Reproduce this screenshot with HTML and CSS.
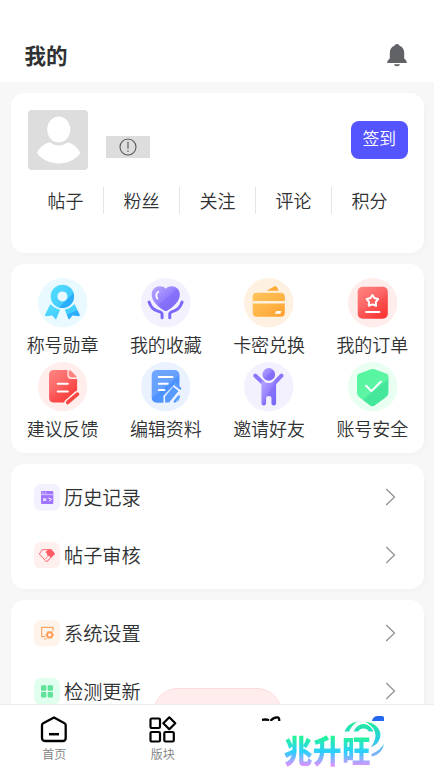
FILE: index.html
```html
<!DOCTYPE html>
<html lang="zh-CN">
<head>
<meta charset="utf-8">
<title>我的</title>
<link rel="stylesheet" href="styles.css">
</head>
<body>
<svg class="defs" width="0" height="0">
  <defs>
    <linearGradient id="cyan" x1="0" y1="0" x2="1" y2="1"><stop offset=".2" stop-color="#50d9ff"/><stop offset=".65" stop-color="#43ccff"/><stop offset=".68" stop-color="#2caefc"/></linearGradient>
    <linearGradient id="violet" x1="0" y1="0" x2="1" y2="1"><stop offset=".1" stop-color="#b3a0ff"/><stop offset=".48" stop-color="#9580fd"/><stop offset=".52" stop-color="#8772fa"/><stop offset="1" stop-color="#7768f8"/></linearGradient>
    <linearGradient id="orange" x1="0" y1="0" x2="1" y2="1"><stop offset="0" stop-color="#ffc45e"/><stop offset=".5" stop-color="#ffb547"/><stop offset="1" stop-color="#ff9f30"/></linearGradient>
    <linearGradient id="red" x1="0" y1="0" x2=".7" y2="1"><stop offset="0" stop-color="#ff8583"/><stop offset=".5" stop-color="#fb6665"/><stop offset=".65" stop-color="#fa5352"/><stop offset="1" stop-color="#fa3938"/></linearGradient>
    <linearGradient id="blue" x1="0" y1="0" x2=".7" y2="1"><stop offset="0" stop-color="#70a7ff"/><stop offset=".55" stop-color="#659fff"/><stop offset=".6" stop-color="#4b91ff"/><stop offset="1" stop-color="#5599ff"/></linearGradient>
    <linearGradient id="green" x1="0" y1="0" x2=".7" y2="1"><stop offset="0" stop-color="#52f69d"/><stop offset=".62" stop-color="#5df5a5"/><stop offset=".67" stop-color="#45e69c"/><stop offset="1" stop-color="#45e99a"/></linearGradient>
    <linearGradient id="arc" gradientUnits="userSpaceOnUse" x1="0" y1="0" x2="0" y2="38"><stop offset="0" stop-color="#22ef91"/><stop offset=".5" stop-color="#29cfe4"/><stop offset="1" stop-color="#8fa8ff"/></linearGradient>
  </defs>
</svg>

<header class="topbar">
  <h1>我的</h1>
  <svg class="bell" viewBox="0 0 20 23"><path fill="#606266" d="M10 0c1.300 0 2.300.7 2.500 1.800 3.200 1.100 4.700 3.800 4.700 7.200v5c0 1.300 2.500 2.300 2.500 4v1H.3v-1c0-1.700 2.500-2.700 2.500-4V9c0-3.400 1.500-6.100 4.700-7.200C7.700.7 8.700 0 10 0zM7 20.200h6c-.3 1.300-1.400 2-3 2s-2.700-.7-3-2z"/></svg>
</header>

<main>
  <section class="card profile">
    <div class="user">
      <svg class="avatar" viewBox="0 0 60 60"><rect width="60" height="60" rx="4" fill="#ddd"/><ellipse cx="30.700" cy="19.500" rx="11.500" ry="13" fill="#fff"/><path fill="#fff" d="M22 32.200c5.500 4.300 12 4.300 17.500 0 5.500 1.300 10.500 5.600 12.800 10.800C47.500 49.800 39.500 53.500 31 53.500S13.500 49.800 9 43c2-5.200 7.200-9.500 13-10.800z"/></svg>
      <div class="badge"><svg viewBox="0 0 18 18"><g fill="none" stroke="#555" stroke-width="1.100"><circle cx="9" cy="9" r="8"/><path d="M9 3.800v7M9 12.600v1.300"/></g></svg></div>
      <button class="sign">签到</button>
    </div>
    <ul class="stats"><li>帖子</li><li>粉丝</li><li>关注</li><li>评论</li><li>积分</li></ul>
  </section>

  <section class="card grid">
    <div class="cell">
      <svg viewBox="0 0 148 148"><circle cx="74" cy="74" r="74" fill="#e8faff"/><g fill="url(#cyan)"><path d="M37 78q10 12 29 17l-11 27q-2 3-4 0l-8-10-19 2q-4 0-3-4zM109 78q-10 12-29 17l11 27q2 3 4 0l8-10 19 2q4 0 3-4z"/><path fill-rule="evenodd" d="M73 20a35 35 0 1 1 0 70a35 35 0 1 1 0-70zm0 20a15 15 0 1 0 0 30a15 15 0 1 0 0-30z"/></g></svg>
      <span>称号勋章</span>
    </div>
    <div class="cell">
      <svg viewBox="0 0 148 148"><circle cx="74" cy="74" r="74" fill="#f4f1ff"/><path fill="url(#violet)" d="M74 32C58 17 32 27 32 49c0 22 22 38 37 48q5 3 10 0c15-10 37-26 37-48 0-22-26-32-42-17z"/><path d="M52 41q-11 9-3 21" fill="none" stroke="#fff" stroke-width="5" stroke-linecap="round"/><g fill="none" stroke="#7a68f8" stroke-width="9" stroke-linecap="round" stroke-linejoin="round"><path d="M24 72q8 23 26 27 13 3 13 9v11"/><path d="M123 72q-8 23-25 27-12 3-12 9v11"/></g></svg>
      <span>我的收藏</span>
    </div>
    <div class="cell">
      <svg viewBox="0 0 148 148"><circle cx="74" cy="74" r="74" fill="#fff1e1"/><path fill="#ffa936" d="M67 38l25-13q4-2 6 2l6 11z"/><rect x="26" y="44" width="96" height="72" rx="12" fill="url(#orange)"/><path d="M26 72.500h96" stroke="#fff0dc" stroke-width="8"/><path fill="#fff" d="M92 107l5-8h15l-3 8z"/></svg>
      <span>卡密兑换</span>
    </div>
    <div class="cell">
      <svg viewBox="0 0 148 148"><circle cx="74" cy="74" r="74" fill="#ffedeb"/><rect x="29" y="26" width="90" height="96" rx="15" fill="url(#red)"/><path d="M73 51l6 9 11 3-7 9 1 11-11-4-11 4 1-11-7-9 11-3z" fill="none" stroke="#fff" stroke-width="6" stroke-linejoin="round"/><path d="M54 102h40" stroke="#fff" stroke-width="6" stroke-linecap="round"/></svg>
      <span>我的订单</span>
    </div>
    <div class="cell">
      <svg viewBox="0 0 148 148"><circle cx="74" cy="74" r="74" fill="#ffeeeb"/><path fill="url(#red)" d="M47 24h41v15q0 12 12 12h17v43l-34 27H48q-15 0-15-15V38q0-14 14-14z"/><path fill="#ff8583" d="M92 25q5 0 8 3l14 14q3 3 1 4h-14q-9 0-9-8z"/><path d="M59 65h30M59 88h30" stroke="#fff" stroke-width="6" stroke-linecap="round"/><path d="M89 121l29-25" stroke="#ffeeeb" stroke-width="20" stroke-linecap="round"/><path d="M89 121l29-25" stroke="#fa4443" stroke-width="11" stroke-linecap="round"/></svg>
      <span>建议反馈</span>
    </div>
    <div class="cell">
      <svg viewBox="0 0 148 148"><circle cx="74" cy="74" r="74" fill="#eaf2ff"/><rect x="32" y="24" width="83" height="98" rx="15" fill="url(#blue)"/><path d="M53 45h41M53 65h27M53 84h17" stroke="#fff" stroke-width="6" stroke-linecap="round"/><path fill="#eaf2ff" d="M103 64l21 18-18 42H67v-23z"/><path fill="#579aff" d="M72 103l24-29 16 13-28 34H72z"/><path d="M103 68l14 11M101 118l12-15" stroke="#579aff" stroke-width="7" stroke-linecap="round"/></svg>
      <span>编辑资料</span>
    </div>
    <div class="cell">
      <svg viewBox="0 0 148 148"><circle cx="74" cy="74" r="74" fill="#f4f1ff"/><circle cx="74" cy="37" r="19" fill="url(#violet)"/><path d="M34 41l24 23M112 41L90 64" stroke="#8b76fa" stroke-width="12" stroke-linecap="round"/><path fill="url(#violet)" d="M52 56q22 13 44 0v66q0 8-7 8t-7-8v-13q0-7-8-7t-8 7v13q0 8-7 8t-7-8z"/></svg>
      <span>邀请好友</span>
    </div>
    <div class="cell">
      <svg viewBox="0 0 148 148"><circle cx="74" cy="74" r="74" fill="#e9fff2"/><path fill="url(#green)" d="M69 22q5-2 10 0l37 13q5 2 5 8v49q0 8-7 13l-33 24q-8 6-16 0l-32-24q-6-5-6-13V43q0-6 5-8z"/><path d="M54 71l16 16 28-28" fill="none" stroke="#fff" stroke-width="6" stroke-linecap="round" stroke-linejoin="round"/></svg>
      <span>账号安全</span>
    </div>
  </section>

  <section class="card list">
    <div class="row">
      <svg class="ico" viewBox="0 0 78 80"><rect width="78" height="80" rx="20" fill="#f4f1ff"/><rect x="21" y="21" width="37" height="39" rx="3" fill="#a074ff"/><path d="M21 32h37" stroke="#d5c4ff" stroke-width="3"/><path d="M25 27h4M33 27h4" stroke="#f4f1ff" stroke-width="3"/><path d="M27 43h10v8H27z" fill="#e6dcff"/><path d="M43 42l10 4-8 6" fill="none" stroke="#f4f1ff" stroke-width="3"/></svg>
      <span>历史记录</span><svg class="arrow" viewBox="0 0 11 18"><path d="M1.200 1l8.300 8-8.300 8"/></svg>
    </div>
    <div class="row">
      <svg class="ico" viewBox="0 0 78 80"><rect width="78" height="80" rx="20" fill="#ffefef"/><path d="M25 23h20l16 13-23 24-22-24z" fill="none" stroke="#ff6870" stroke-width="3" stroke-linejoin="round"/><path fill="#ff5b64" d="M34 31l9-9h10l10 13-13 14-3-7-7 1-1-9z"/><path d="M33 52l8-8M40 58l8-8" stroke="#ff7c82" stroke-width="3"/></svg>
      <span>帖子审核</span><svg class="arrow" viewBox="0 0 11 18"><path d="M1.200 1l8.300 8-8.300 8"/></svg>
    </div>
  </section>

  <section class="card list">
    <div class="row">
      <svg class="ico" viewBox="0 0 78 80"><rect width="78" height="80" rx="20" fill="#fff4ec"/><path d="M33 50H23V22h34v12" fill="none" stroke="#ffa562" stroke-width="3.500"/><path d="M30 57h8" stroke="#ffa562" stroke-width="3"/><path fill="#ffa05a" fill-rule="evenodd" d="M41 34h12l7 11-7 11H41l-7-11zm6 6a5 5 0 1 0 0 10a5 5 0 1 0 0-10z"/></svg>
      <span>系统设置</span><svg class="arrow" viewBox="0 0 11 18"><path d="M1.200 1l8.300 8-8.300 8"/></svg>
    </div>
    <div class="row">
      <svg class="ico" viewBox="0 0 78 80"><rect width="78" height="80" rx="20" fill="#e1ffee"/><g fill="#5fe398"><rect x="21" y="22" width="16" height="16" rx="3"/><rect x="41" y="22" width="16" height="16" rx="3"/><rect x="21" y="42" width="16" height="17" rx="3"/><rect x="41" y="42" width="16" height="17" rx="3"/></g></svg>
      <span>检测更新</span><svg class="arrow" viewBox="0 0 11 18"><path d="M1.200 1l8.300 8-8.300 8"/></svg>
    </div>
  </section>
</main>

<div class="pill"></div>

<nav class="tabs">
  <div class="tab"><svg viewBox="0 0 28 28"><path d="M14 2.500l10.500 5.700q1.200.7 1.200 2V23q0 3-3 3H5q-3 0-3-3V10.200q0-1.300 1.200-2z" fill="none" stroke="#000" stroke-width="2.300" stroke-linejoin="round"/><path d="M9 19.200h10" stroke="#000" stroke-width="2.500"/></svg><span>首页</span></div>
  <div class="tab"><svg viewBox="0 0 28 28"><g fill="none" stroke="#000" stroke-width="2.200"><rect x="1.500" y="3.500" width="9.500" height="9.500" rx="1.300"/><rect x="1.500" y="17" width="9.500" height="9.500" rx="1.300"/><rect x="15.300" y="17" width="9.500" height="9.500" rx="1.300"/><path d="M20.300 2.300l6 6-6 6-6-6z" stroke-linejoin="round"/></g></svg><span>版块</span></div>
  <div class="tab cut"><svg viewBox="0 0 20 5"><path d="M1 3.800q4-.8 7 .4M9.500 5q3-4 7-3.700 2 .2 1.700 3.700" fill="none" stroke="#000" stroke-width="2.300"/></svg></div>
  <div class="tab cut"><svg viewBox="0 0 20 5"><path d="M2 5q1-5 6-5h4q2 0 2 1.500V5z" fill="#2468f2"/></svg></div>
</nav>

<div class="brand">
  <span>兆升旺</span>
  <svg viewBox="0 0 44 38"><g fill="url(#arc)"><path d="M2.500 11.500Q6 3 15.500 1.500 10 5 7 11.500z"/><path d="M11.500 11.500Q15 4 21.500 4T31.500 11.500H27q-2-3-5.500-3t-5.500 3z"/><path d="M23 1.500q14 2 15.500 13Q38 24 28.500 27.500 33 22 33.500 16 33.500 7 23 1.500z"/><path d="M42 23.500Q40.500 34 30 36.500q-1.500-2 .5-3Q38 30.500 42 23.500z"/></g></svg>
</div>
</body>
</html>
```
FILE: styles.css
```css
* { box-sizing: border-box; }
html, body { height: 100%; }
body {
  margin: 0;
  overflow: hidden;
  background: #f7f7f7;
  color: #303133;
  font-family: "Noto Sans CJK SC", sans-serif;
  font-weight: 350;
}
.defs { position: absolute; }
.topbar {
  display: flex;
  justify-content: space-between;
  align-items: center;
  height: 82px;
  padding: 28px 27px 0 24.500px;
  background: #fff;
}
h1 { margin: 0; font-size: 21.500px; line-height: 30px; font-weight: 700; }
.bell { width: 20px; height: 23px; }
main { display: flex; flex-direction: column; gap: 11px; padding: 11px 10px 0 11px; }
.card {
  flex: none;
  border-radius: 14px;
  background: #fff;
  box-shadow: 2px 2px 6px rgba(0, 0, 0, .025);
}
.profile { height: 160px; padding: 17px 16.500px 0 17px; }
.user { display: flex; height: 60px; align-items: flex-start; }
.avatar { width: 60px; height: 60px; }
.badge { display: flex; align-items: center; justify-content: center; width: 43.500px; height: 22px; margin: 26px auto 0 18px; background: #ddd; }
.badge svg { width: 18px; height: 18px; }
.sign {
  width: 56.500px;
  height: 37.500px;
  margin-top: 11px;
  padding: 0 0 2px;
  border: 0;
  border-radius: 8px;
  background: #5555ff;
  color: #fff;
  font: 350 16.800px/35px "Noto Sans CJK SC", sans-serif;
}
.stats { display: flex; width: 379px; margin: 17px 0 0; padding: 0; list-style: none; }
.stats li { flex: 1; height: 27px; border-right: 1px solid #e4e4e4; font-size: 18px; line-height: 27px; text-align: center; }
.stats li:last-child { border: 0; }
.grid { display: grid; grid-template-columns: repeat(4, 1fr); grid-auto-rows: 84px; height: 189px; padding-top: 14px; }
.cell { display: flex; flex-direction: column; align-items: center; }
.cell svg { width: 49.500px; height: 49.500px; }
.cell span { margin-top: 3px; font-size: 18px; line-height: 27px; }
.list { height: 125px; padding: 4.500px 28px 0 23px; }
.row { display: flex; align-items: center; height: 57.800px; font-size: 19.200px; }
.row span { margin-top: -1px; }
.ico { width: 26px; height: 26.600px; margin-right: 4px; }
.arrow { width: 11px; height: 18px; margin-left: auto; fill: none; stroke: #909399; stroke-width: 1.300; }
.pill { position: absolute; left: 153px; top: 688px; width: 129px; height: 50px; border: 1px solid #fddcdc; border-radius: 25px; background: #ffecec; }
.tabs { position: fixed; left: 0; right: 0; bottom: 0; display: flex; height: 67px; border-top: 1px solid #ececec; background: #fff; }
.tab { flex: 1; display: flex; flex-direction: column; align-items: center; padding-top: 9.500px; font-size: 12px; line-height: 18px; color: #7d7e80; }
.tab svg { width: 28px; height: 28px; }
.tab span { margin-top: 2.500px; }
.tab.cut { padding-top: 11px; }
.tab.cut svg { width: 20px; height: 5px; }
.brand { position: fixed; left: 284px; top: 720px; width: 100px; height: 51px; }
.brand span {
  display: block;
  margin-top: 13px;
  font-size: 28.500px;
  line-height: 34px;
  letter-spacing: .5px;
  font-weight: 900;
  background: linear-gradient(#24fa89 10%, #2bcfff 55%, #f18cff 95%);
  background-clip: text;
  -webkit-background-clip: text;
  color: transparent;
  transform: scaleY(1.120);
}
.brand svg { position: absolute; left: 58px; top: 0; width: 44px; height: 38px; }
```
